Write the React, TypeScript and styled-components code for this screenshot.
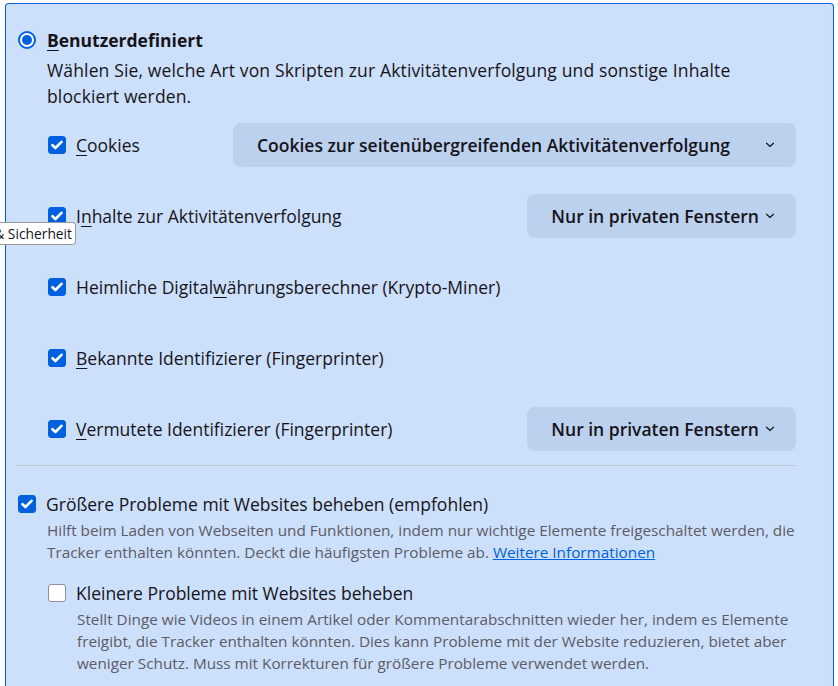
import styled, { createGlobalStyle } from "styled-components";

const GlobalStyle = createGlobalStyle`
  html, body {
    margin: 0;
    background: #ffffff;
  }
  body {
    font-family: "Open Sans", "Noto Sans", sans-serif;
    color: #15141a;
    font-size: 17.5px;
  }
`;

const Page = styled.div`
  position: relative;
  padding: 3px 4px 0 5px;
  height: 683px;
  overflow: hidden;
`;

const Panel = styled.section`
  border: 1px solid #0061e0;
  border-bottom: none;
  border-radius: 4px 4px 0 0;
  background: #cde0fb;
  padding: 25px 37px 20px 11px;
  min-height: 700px;
`;

const Header = styled.label`
  display: flex;
  align-items: center;
  gap: 11px;
  height: 22px;
  font-weight: 700;
`;

const Radio = styled.span`
  width: 18px;
  height: 18px;
  box-sizing: border-box;
  border-radius: 50%;
  border: 2px solid #0061e0;
  background: #ffffff;
  display: flex;
  align-items: center;
  justify-content: center;
  margin-left: 1px;

  &::after {
    content: "";
    width: 10px;
    height: 10px;
    border-radius: 50%;
    background: #0061e0;
  }
`;

const AccessKey = styled.u`
  text-decoration-thickness: 1px;
  text-underline-offset: 3px;
`;

const Description = styled.p`
  margin: 7px 0 0 30px;
  line-height: 25.5px;
  letter-spacing: 0.15px;
`;

const OptionList = styled.div`
  display: flex;
  flex-direction: column;
  gap: 27px;
  margin: 14px 0 0 31px;
`;

const Row = styled.div`
  display: flex;
  align-items: center;
  justify-content: space-between;
  min-height: 44px;
`;

const CheckLabel = styled.label`
  display: flex;
  align-items: center;
  gap: 10px;
  white-space: nowrap;
`;

const Box = styled.span<{ $checked: boolean }>`
  flex: none;
  width: 18px;
  height: 18px;
  box-sizing: border-box;
  border-radius: 3px;
  display: flex;
  align-items: center;
  justify-content: center;
  background: ${({ $checked }) => ($checked ? "#0061e0" : "#ffffff")};
  border: 1px solid ${({ $checked }) => ($checked ? "#0061e0" : "#8f8f9d")};
`;

const Select = styled.button<{ $wide?: boolean }>`
  font-family: inherit;
  font-size: 17.5px;
  font-weight: 600;
  color: #15141a;
  border: none;
  border-radius: 8px;
  background: #bcd1ee;
  height: 44px;
  display: flex;
  align-items: center;
  gap: ${({ $wide }) => ($wide ? "35px" : "6px")};
  padding: 0 21px 0 24px;
`;

const Divider = styled.hr`
  border: none;
  border-top: 1px solid #bdc6d2;
  margin: 14px 0 0 0;
`;

const FixBlock = styled.div<{ $indent: number; $gap: number }>`
  margin: ${({ $gap }) => $gap}px 0 0 ${({ $indent }) => $indent}px;
`;

const FixLabel = styled(CheckLabel)`
  height: 22px;
`;

const FixText = styled.p`
  margin: 4px -12px 0 29px;
  font-size: 15.3px;
  line-height: 22.3px;
  color: #5b5b66;
`;

const Link = styled.a`
  color: #0061e0;
  text-decoration: underline;
`;

const Tooltip = styled.div`
  position: absolute;
  top: 222px;
  left: 0;
  width: 76px;
  height: 23px;
  box-sizing: border-box;
  overflow: hidden;
  display: flex;
  justify-content: flex-end;
  align-items: center;
  background: #ffffff;
  border: 1px solid #9a9a9a;
  border-left: none;
  border-radius: 0 4px 4px 0;
  padding-right: 3px;
  font-size: 13.8px;
  white-space: nowrap;
  color: #15141a;
`;

const Check = () => (
  <svg width="12" height="10" viewBox="0 0 12 10" fill="none">
    <path
      d="M1.5 5.2 4.4 8 10.5 1.8"
      stroke="#ffffff"
      strokeWidth="2.6"
      strokeLinecap="round"
      strokeLinejoin="round"
    />
  </svg>
);

const Chevron = () => (
  <svg width="10" height="6" viewBox="0 0 10 6" fill="none">
    <path d="M1.5 1.2 5 4.5 8.5 1.2" stroke="#15141a" strokeWidth="1.2" strokeLinecap="round" />
  </svg>
);

const CheckBox = ({ checked }: { checked: boolean }) => (
  <Box $checked={checked}>{checked && <Check />}</Box>
);

const App = () => {
  return (
    <>
      <GlobalStyle />
      <Page>
        <Panel>
          <Header>
            <Radio />
            <span>
              <AccessKey>B</AccessKey>enutzerdefiniert
            </span>
          </Header>
          <Description>
            Wählen Sie, welche Art von Skripten zur Aktivitätenverfolgung und sonstige Inhalte
            blockiert werden.
          </Description>

          <OptionList>
            <Row>
              <CheckLabel>
                <CheckBox checked />
                <span>
                  <AccessKey>C</AccessKey>ookies
                </span>
              </CheckLabel>
              <Select $wide>
                Cookies zur seitenübergreifenden Aktivitätenverfolgung
                <Chevron />
              </Select>
            </Row>
            <Row>
              <CheckLabel>
                <CheckBox checked />
                <span>
                  I<AccessKey>n</AccessKey>halte zur Aktivitätenverfolgung
                </span>
              </CheckLabel>
              <Select>
                Nur in privaten Fenstern
                <Chevron />
              </Select>
            </Row>
            <Row>
              <CheckLabel>
                <CheckBox checked />
                <span>
                  Heimliche Digital<AccessKey>w</AccessKey>ährungsberechner (Krypto-Miner)
                </span>
              </CheckLabel>
            </Row>
            <Row>
              <CheckLabel>
                <CheckBox checked />
                <span>
                  <AccessKey>B</AccessKey>ekannte Identifizierer (Fingerprinter)
                </span>
              </CheckLabel>
            </Row>
            <Row>
              <CheckLabel>
                <CheckBox checked />
                <span>
                  <AccessKey>V</AccessKey>ermutete Identifizierer (Fingerprinter)
                </span>
              </CheckLabel>
              <Select>
                Nur in privaten Fenstern
                <Chevron />
              </Select>
            </Row>
          </OptionList>

          <Divider />

          <FixBlock $indent={1} $gap={27}>
            <FixLabel>
              <CheckBox checked />
              <span>Größere Probleme mit Websites beheben (empfohlen)</span>
            </FixLabel>
            <FixText>
              Hilft beim Laden von Webseiten und Funktionen, indem nur wichtige Elemente
              freigeschaltet werden, die Tracker enthalten könnten. Deckt die häufigsten Probleme
              ab. <Link href="#">Weitere Informationen</Link>
            </FixText>
          </FixBlock>

          <FixBlock $indent={31} $gap={18}>
            <FixLabel>
              <CheckBox checked={false} />
              <span>Kleinere Probleme mit Websites beheben</span>
            </FixLabel>
            <FixText>
              Stellt Dinge wie Videos in einem Artikel oder Kommentarabschnitten wieder her, indem
              es Elemente freigibt, die Tracker enthalten könnten. Dies kann Probleme mit der
              Website reduzieren, bietet aber weniger Schutz. Muss mit Korrekturen für größere
              Probleme verwendet werden.
            </FixText>
          </FixBlock>
        </Panel>
        <Tooltip>Datenschutz &amp; Sicherheit</Tooltip>
      </Page>
    </>
  );
};

export default App;
